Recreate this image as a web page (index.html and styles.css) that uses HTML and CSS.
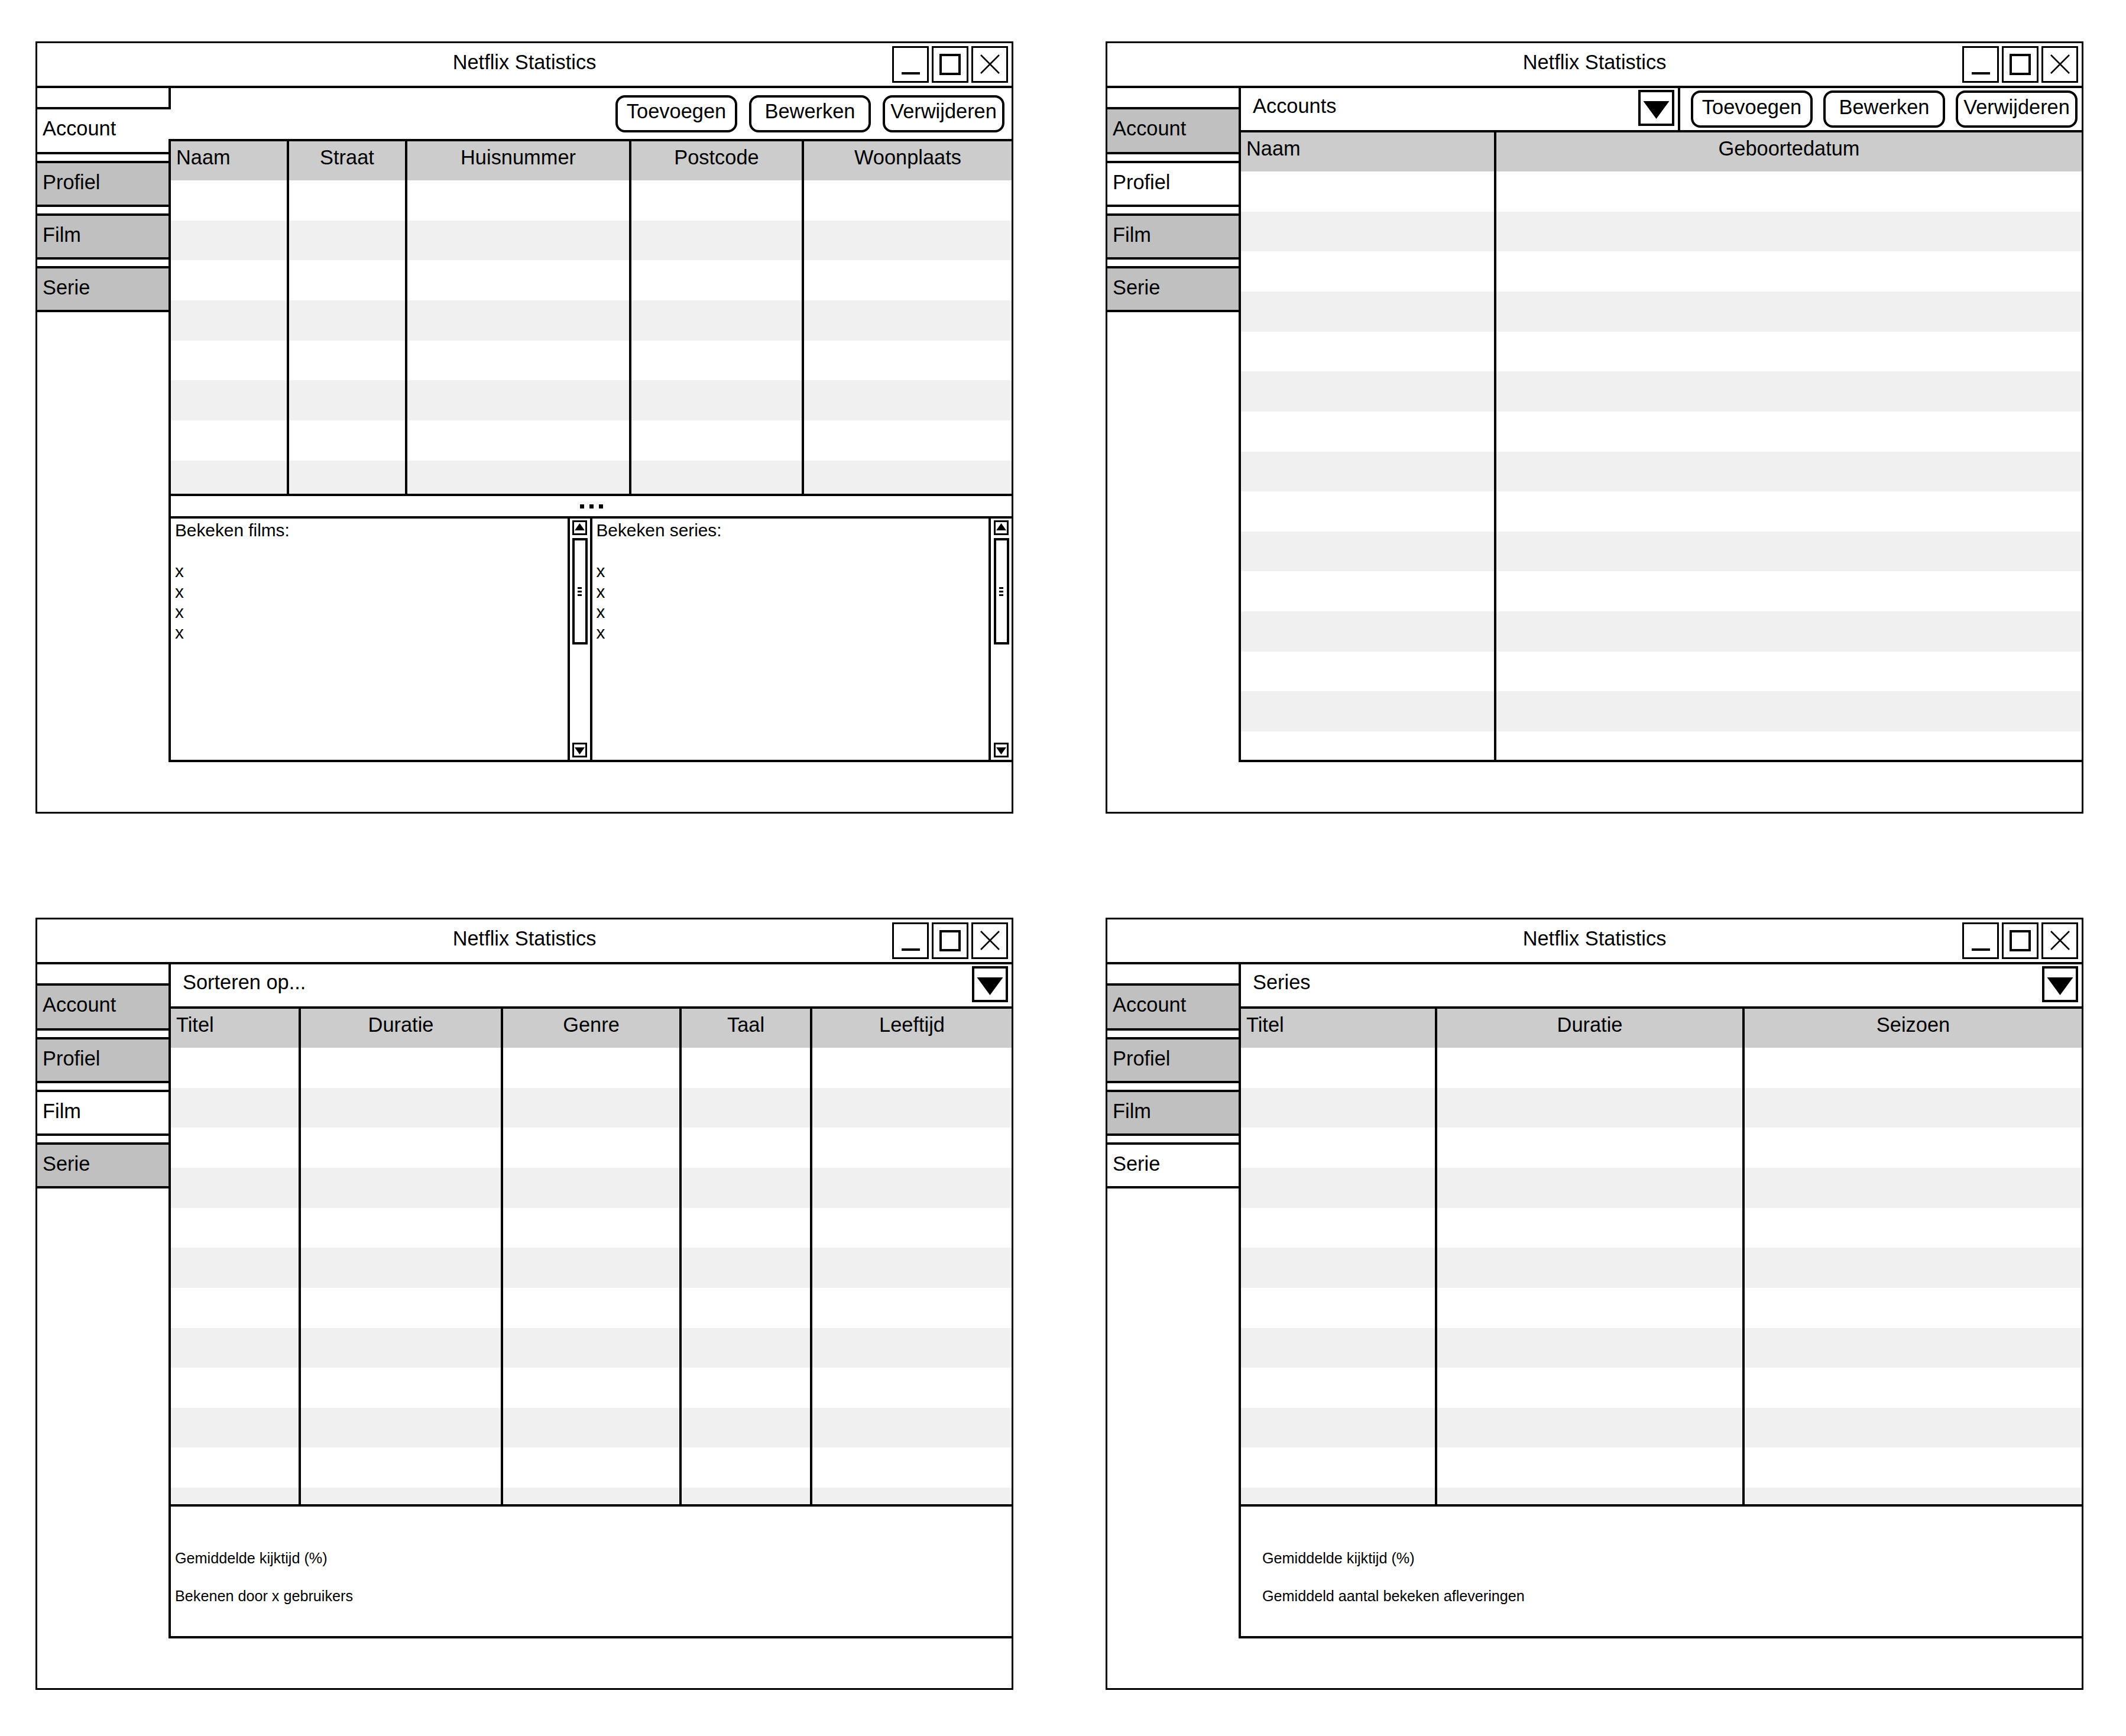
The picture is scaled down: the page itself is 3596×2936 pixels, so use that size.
FILE: index.html
```html
<!DOCTYPE html>
<html lang="nl">
<head>
<meta charset="utf-8">
<title>Netflix Statistics – wireframes</title>
<link rel="stylesheet" href="styles.css">
</head>
<body>
<div class="page">

  <!-- Window 1: Account -->
  <section class="window">
    <header class="titlebar">
      <div class="title">Netflix Statistics</div>
      <div class="ctrls">
        <div class="ctrl"><svg viewBox="0 0 56 56"><path d="M13 43H44" stroke="#000" stroke-width="4"/></svg></div>
        <div class="ctrl"><svg viewBox="0 0 56 56"><rect x="12" y="12" width="32" height="32" fill="none" stroke="#000" stroke-width="4"/></svg></div>
        <div class="ctrl"><svg viewBox="0 0 56 56"><path d="M13 12L44 43M44 12L13 43" stroke="#000" stroke-width="2.5"/></svg></div>
      </div>
    </header>
    <div class="wbody">
      <nav class="sidebar">
        <div class="side-top"></div>
        <div class="tab first active">Account</div>
        <div class="tab">Profiel</div>
        <div class="tab">Film</div>
        <div class="tab">Serie</div>
      </nav>
      <div class="content">
        <div class="btnbar">
          <div class="btn">Toevoegen</div>
          <div class="btn">Bewerken</div>
          <div class="btn">Verwijderen</div>
        </div>
        <div class="pane">
          <div class="table cols-acc">
            <div class="thead">
              <div class="th left">Naam</div>
              <div class="th">Straat</div>
              <div class="th">Huisnummer</div>
              <div class="th">Postcode</div>
              <div class="th">Woonplaats</div>
            </div>
            <div class="tbody h-acc">
              <div class="tc"></div><div class="tc"></div><div class="tc"></div><div class="tc"></div><div class="tc"></div>
            </div>
          </div>
          <div class="splitter"><span></span><span></span><span></span></div>
          <div class="lower">
            <div class="list">
              <div>Bekeken films:</div>
              <div>&nbsp;</div>
              <div>x</div><div>x</div><div>x</div><div>x</div>
            </div>
            <div class="vscroll">
              <div class="sbtn"><svg viewBox="0 0 19 19"><path d="M1 14L9.5 2L18 14Z" fill="#000"/></svg></div>
              <div class="thumb"><i></i><i></i><i></i></div>
              <div class="sbtn down"><svg viewBox="0 0 19 19"><path d="M1 5L18 5L9.5 17Z" fill="#000"/></svg></div>
            </div>
            <div class="list">
              <div>Bekeken series:</div>
              <div>&nbsp;</div>
              <div>x</div><div>x</div><div>x</div><div>x</div>
            </div>
            <div class="vscroll last">
              <div class="sbtn"><svg viewBox="0 0 19 19"><path d="M1 14L9.5 2L18 14Z" fill="#000"/></svg></div>
              <div class="thumb"><i></i><i></i><i></i></div>
              <div class="sbtn down"><svg viewBox="0 0 19 19"><path d="M1 5L18 5L9.5 17Z" fill="#000"/></svg></div>
            </div>
          </div>
        </div>
      </div>
    </div>
  </section>

  <!-- Window 2: Profiel -->
  <section class="window">
    <header class="titlebar">
      <div class="title">Netflix Statistics</div>
      <div class="ctrls">
        <div class="ctrl"><svg viewBox="0 0 56 56"><path d="M13 43H44" stroke="#000" stroke-width="4"/></svg></div>
        <div class="ctrl"><svg viewBox="0 0 56 56"><rect x="12" y="12" width="32" height="32" fill="none" stroke="#000" stroke-width="4"/></svg></div>
        <div class="ctrl"><svg viewBox="0 0 56 56"><path d="M13 12L44 43M44 12L13 43" stroke="#000" stroke-width="2.5"/></svg></div>
      </div>
    </header>
    <div class="wbody">
      <nav class="sidebar">
        <div class="side-top"></div>
        <div class="tab first">Account</div>
        <div class="tab active">Profiel</div>
        <div class="tab">Film</div>
        <div class="tab">Serie</div>
      </nav>
      <div class="content bordered">
        <div class="toprow">
          <div class="dropdown split">
            <span class="dd-text">Accounts</span>
            <div class="dd-arrow"><svg viewBox="0 0 53 53"><path d="M4.5 15H48.5L26.5 45Z" fill="#000"/></svg></div>
          </div>
          <div class="btns">
            <div class="btn">Toevoegen</div>
            <div class="btn">Bewerken</div>
            <div class="btn">Verwijderen</div>
          </div>
        </div>
        <div class="table cols-prof">
          <div class="thead">
            <div class="th left">Naam</div>
            <div class="th">Geboortedatum</div>
          </div>
          <div class="tbody h-full">
            <div class="tc"></div><div class="tc"></div>
          </div>
        </div>
      </div>
    </div>
  </section>

  <!-- Window 3: Film -->
  <section class="window">
    <header class="titlebar">
      <div class="title">Netflix Statistics</div>
      <div class="ctrls">
        <div class="ctrl"><svg viewBox="0 0 56 56"><path d="M13 43H44" stroke="#000" stroke-width="4"/></svg></div>
        <div class="ctrl"><svg viewBox="0 0 56 56"><rect x="12" y="12" width="32" height="32" fill="none" stroke="#000" stroke-width="4"/></svg></div>
        <div class="ctrl"><svg viewBox="0 0 56 56"><path d="M13 12L44 43M44 12L13 43" stroke="#000" stroke-width="2.5"/></svg></div>
      </div>
    </header>
    <div class="wbody">
      <nav class="sidebar">
        <div class="side-top"></div>
        <div class="tab first">Account</div>
        <div class="tab">Profiel</div>
        <div class="tab active">Film</div>
        <div class="tab">Serie</div>
      </nav>
      <div class="content bordered">
        <div class="toprow">
          <div class="dropdown">
            <span class="dd-text">Sorteren op...</span>
            <div class="dd-arrow"><svg viewBox="0 0 53 53"><path d="M4.5 15H48.5L26.5 45Z" fill="#000"/></svg></div>
          </div>
        </div>
        <div class="table cols-film">
          <div class="thead">
            <div class="th left">Titel</div>
            <div class="th">Duratie</div>
            <div class="th">Genre</div>
            <div class="th">Taal</div>
            <div class="th">Leeftijd</div>
          </div>
          <div class="tbody h-stats">
            <div class="tc"></div><div class="tc"></div><div class="tc"></div><div class="tc"></div><div class="tc"></div>
          </div>
        </div>
        <div class="stats">
          <p>Gemiddelde kijktijd (%)</p>
          <p>Bekenen door x gebruikers</p>
        </div>
      </div>
    </div>
  </section>

  <!-- Window 4: Serie -->
  <section class="window">
    <header class="titlebar">
      <div class="title">Netflix Statistics</div>
      <div class="ctrls">
        <div class="ctrl"><svg viewBox="0 0 56 56"><path d="M13 43H44" stroke="#000" stroke-width="4"/></svg></div>
        <div class="ctrl"><svg viewBox="0 0 56 56"><rect x="12" y="12" width="32" height="32" fill="none" stroke="#000" stroke-width="4"/></svg></div>
        <div class="ctrl"><svg viewBox="0 0 56 56"><path d="M13 12L44 43M44 12L13 43" stroke="#000" stroke-width="2.5"/></svg></div>
      </div>
    </header>
    <div class="wbody">
      <nav class="sidebar">
        <div class="side-top"></div>
        <div class="tab first">Account</div>
        <div class="tab">Profiel</div>
        <div class="tab">Film</div>
        <div class="tab active">Serie</div>
      </nav>
      <div class="content bordered">
        <div class="toprow">
          <div class="dropdown">
            <span class="dd-text">Series</span>
            <div class="dd-arrow"><svg viewBox="0 0 53 53"><path d="M4.5 15H48.5L26.5 45Z" fill="#000"/></svg></div>
          </div>
        </div>
        <div class="table cols-serie">
          <div class="thead">
            <div class="th left">Titel</div>
            <div class="th">Duratie</div>
            <div class="th">Seizoen</div>
          </div>
          <div class="tbody h-stats">
            <div class="tc"></div><div class="tc"></div><div class="tc"></div>
          </div>
        </div>
        <div class="stats wide">
          <p>Gemiddelde kijktijd (%)</p>
          <p>Gemiddeld aantal bekeken afleveringen</p>
        </div>
      </div>
    </div>
  </section>

</div>
</body>
</html>
```

FILE: styles.css
```css
* { box-sizing: border-box; }

html, body {
  margin: 0;
  background: #fff;
}

body {
  font-family: "Liberation Sans", Arial, Helvetica, sans-serif;
  color: #000;
  font-size: 34.4px;
  line-height: 38px;
}

.page {
  display: grid;
  grid-template-columns: 1654px 1654px;
  column-gap: 156px;
  row-gap: 176px;
  padding: 70px 0 0 60px;
}

/* ---------- window frame ---------- */
.window {
  height: 1306px;
  border: 3px solid #000;
  display: flex;
  flex-direction: column;
  background: #fff;
}

.titlebar {
  height: 76px;
  flex: none;
  border-bottom: 4px solid #000;
  display: grid;
  grid-template-columns: 1fr auto 1fr;
}

.title {
  grid-column: 2;
  padding-top: 13px;
  white-space: nowrap;
}

.ctrls {
  grid-column: 3;
  justify-self: end;
  align-self: center;
  display: flex;
  gap: 5px;
  margin-right: 6px;
}

.ctrl {
  width: 62px;
  height: 62px;
  border: 3px solid #000;
}

.ctrl svg {
  display: block;
  width: 56px;
  height: 56px;
}

.wbody {
  flex: 1;
  display: flex;
  align-items: flex-start;
}

/* ---------- sidebar tabs ---------- */
.sidebar {
  width: 226px;
  flex: none;
}

.side-top {
  height: 36px;
  border-bottom: 4px solid #000;
  border-right: 4px solid #000;
}

.tab {
  height: 78px;
  margin-top: 11px;
  border-top: 4px solid #000;
  border-bottom: 4px solid #000;
  border-right: 4px solid #000;
  background: #c0c0c0;
  padding: 13px 0 0 9px;
  white-space: nowrap;
}

.tab.first {
  margin-top: 0;
  border-top: none;
  height: 76px;
  padding-top: 13px;
}

.tab.active {
  background: #fff;
  border-right: none;
}

/* ---------- content ---------- */
.content {
  flex: 1;
  margin-left: -4px;
  position: relative;
}

.content.bordered {
  border-left: 4px solid #000;
}

.pane {
  border-left: 4px solid #000;
}

.btnbar {
  height: 86px;
  display: flex;
  justify-content: flex-end;
  align-items: center;
  gap: 20px;
  padding-right: 12px;
}

.btn {
  width: 206px;
  height: 63px;
  border: 4px solid #000;
  border-radius: 16px;
  background: #fff;
  display: flex;
  align-items: center;
  justify-content: center;
  padding-bottom: 8px;
  white-space: nowrap;
}

/* dropdown row */
.toprow {
  height: 75px;
  display: flex;
  border-bottom: 4px solid #000;
}

.dropdown {
  flex: 1;
  display: flex;
  align-items: flex-start;
  justify-content: space-between;
  padding: 0 6px 0 20px;
}

.dropdown.split {
  border-right: 4px solid #000;
}

.dd-text {
  padding-top: 11px;
  white-space: nowrap;
}

.dd-arrow {
  width: 61px;
  height: 61px;
  margin-top: 3px;
  border: 4px solid #000;
}

.dd-arrow svg {
  display: block;
  width: 53px;
  height: 53px;
}

.btns {
  display: flex;
  align-items: center;
  gap: 18px;
  padding: 0 7px 0 18px;
}

/* ---------- tables ---------- */
.table {
  border-bottom: 4px solid #000;
}

.pane > .table {
  border-top: 4px solid #000;
}

.thead,
.tbody {
  display: grid;
}

.cols-acc .thead,
.cols-acc .tbody { grid-template-columns: 196px 200px 379px 292px 1fr; }

.cols-prof .thead,
.cols-prof .tbody { grid-template-columns: 428px 1fr; }

.cols-film .thead,
.cols-film .tbody { grid-template-columns: 216px 342px 302px 221px 1fr; }

.cols-serie .thead,
.cols-serie .tbody { grid-template-columns: 328px 520px 1fr; }

.th {
  height: 66px;
  background: #ccc;
  text-align: center;
  padding-top: 8px;
  white-space: nowrap;
}

.th.left {
  text-align: left;
  padding-left: 9px;
}

.th + .th,
.tc + .tc {
  border-left: 4px solid #000;
}

.tbody {
  background: repeating-linear-gradient(to bottom, #fff 0, #fff 67.65px, #f0f0f0 67.65px, #f0f0f0 135.3px);
}

.h-acc { height: 530px; }
.h-full { height: 995px; }
.h-stats { height: 772px; }

/* ---------- splitter + lists (window 1) ---------- */
.splitter {
  height: 34px;
  display: flex;
  justify-content: center;
  gap: 9px;
  padding-top: 14px;
}

.splitter span {
  width: 7px;
  height: 7px;
  background: #000;
}

.lower {
  height: 416px;
  border-top: 4px solid #000;
  border-bottom: 4px solid #000;
  display: flex;
}

.list {
  flex: 1;
  padding: 3px 0 0 7px;
  font-size: 29.8px;
  line-height: 34.6px;
}

.vscroll {
  width: 42px;
  flex: none;
  border-left: 4px solid #000;
  border-right: 4px solid #000;
  display: flex;
  flex-direction: column;
  align-items: center;
  padding: 3px 0 4px;
}

.vscroll.last {
  width: 39px;
  border-right: none;
}

.sbtn {
  width: 25px;
  height: 25px;
  border: 3px solid #000;
  flex: none;
}

.sbtn svg {
  display: block;
  width: 19px;
  height: 19px;
}

.sbtn.down {
  margin-top: auto;
}

.thumb {
  width: 26px;
  height: 180px;
  margin-top: 5px;
  border: 4px solid #000;
  display: flex;
  flex-direction: column;
  align-items: center;
  justify-content: center;
  gap: 3px;
}

.thumb i {
  display: block;
  width: 7px;
  height: 3px;
  background: #000;
}

/* ---------- stats ---------- */
.stats {
  height: 223px;
  border-bottom: 4px solid #000;
  padding: 73px 0 0 7px;
  font-size: 25.2px;
  line-height: 29px;
}

.stats.wide {
  padding-left: 36px;
}

.stats p {
  margin: 0 0 35px;
  white-space: nowrap;
}
```
